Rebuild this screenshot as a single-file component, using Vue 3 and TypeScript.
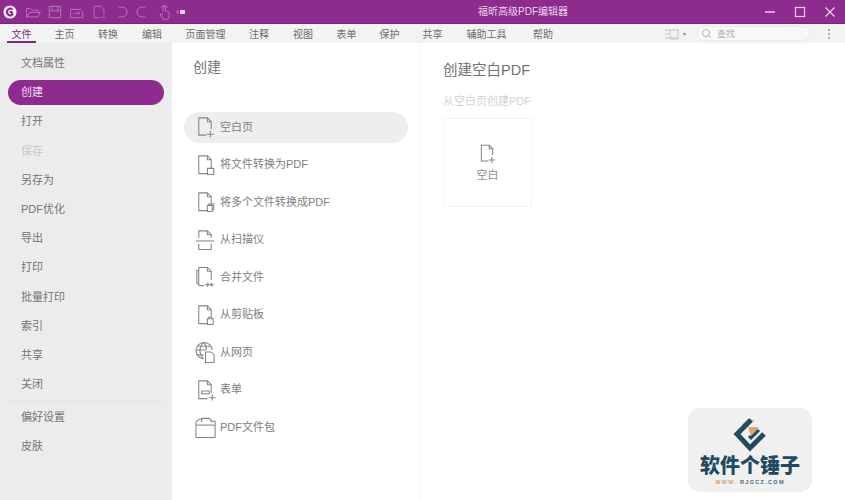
<script setup lang="ts">
const tabs = [
  { label: '文件', w: 43 }, { label: '主页', w: 43 }, { label: '转换', w: 44 }, { label: '编辑', w: 44 },
  { label: '页面管理', w: 63 }, { label: '注释', w: 44 }, { label: '视图', w: 44 }, { label: '表单', w: 43 },
  { label: '保护', w: 43 }, { label: '共享', w: 43 }, { label: '辅助工具', w: 65 }, { label: '帮助', w: 48 }
]
const side1 = ['文档属性', '创建', '打开', '保存', '另存为', 'PDF优化', '导出', '打印', '批量打印', '索引', '共享', '关闭']
const side2 = ['偏好设置', '皮肤']
const items = [
  { label: '空白页', extra: 'M17 16v7 M13.500 19.500h7', body: 'M13 20.500H5V2.500h9l4 4V14 M14 2.500v4h4' },
  { label: '将文件转换为PDF', extra: 'M14 15.500h6.500v6.500H14z', body: 'M14 21H5V2.500h9l4 4V15.500 M14 2.500v4h4' },
  { label: '将多个文件转换成PDF', extra: 'M14 15.500h5v6.500h-5z M15.500 15.500V14h5v6h-1.500', body: 'M14 21H5V2.500h9l4 4V14 M14 2.500v4h4' },
  { label: '从扫描仪', extra: 'M2 13h19', body: 'M5 10V2.500h9l4 4V10 M14 2.500v4h4 M5 16v6h13v-6' },
  { label: '合并文件', extra: 'M11 20h4 M13.500 18l2 2-2 2 M21 20h-3.500 M19 18l-2 2 2 2', body: 'M3 19V5h2 M5 21V2h9l4 4v9 M14 2v4h4 M5 21h5 M3 19h2' },
  { label: '从剪贴板', extra: 'M14 16h6v6h-6z M15.500 16v-2h3v2', body: 'M14 21H5V2.500h9l4 4V13 M14 2.500v4h4' },
  { label: '从网页', extra: 'M12 12h6l3 3v8h-9z', body: 'M10 19a8.500 8.500 0 1 1 9-9 M2 10h10 M10 2c-5 5-5 12 0 17 M10 2c2 2 3 5 3 8 M3 6h14 M3 15h7' },
  { label: '表单', extra: 'M8 13h8v3H8z M19 16.500v6.500 M15.500 20h7', body: 'M14 21H5V2.500h9l4 4V15 M14 2.500v4h4' },
  { label: 'PDF文件包', extra: 'M2 10h20', body: 'M2 7v16h20V6h-5 M2 7l3-3h3 M8 7V3h8l2 2v2' }
]
const toolbar = [
  'M2 6h5l2 2h8v3 M2 6v11h15l3-6H6l-3 6',
  'M3 3h15v15H3z M3 9h15 M7 3v6 M14 3v6',
  'M2 7h13l3 3v8H2z M6 12h8 M12 10l2 2-2 2',
  'M4 3h9l4 4v8 M4 3v15h7 M14 16v3 M17 16v3',
  'M7 4h5a6 6 0 0 1 0 13H7',
  'M14 4H9a6 6 0 0 0 0 13h5',
  'M8 10V3a2 2 0 0 1 3 0v6l5 2v6l-2 3H8l-4-6 4-1 M5 5a5 5 0 0 1 9 0'
]
</script>

<template>
  <div class="app">
    <header class="titlebar">
      <div class="tb-left">
        <svg class="logo" width="14" height="14" viewBox="0 0 17 17">
          <circle cx="8.500" cy="8.500" r="8" fill="#f4eef4" />
          <path d="M11.500 5.500a4 4 0 1 0 0 6l-1-3H8" fill="none" stroke="#8e2a8e" stroke-width="2.400" />
        </svg>
        <svg v-for="(d, i) in toolbar" :key="i" class="tool" width="16" height="16" viewBox="0 0 21 21">
          <path :d="d" fill="none" stroke="#b77eb7" stroke-width="1.200" />
        </svg>
        <span class="caret">▾</span>
        <span class="qat"></span>
      </div>
      <div class="app-title">福昕高级PDF编辑器</div>
      <div class="winctl">
        <svg width="12" height="12" viewBox="0 0 12 12"><path d="M1 6h10" stroke="#f0d8f0" stroke-width="1.400" /></svg>
        <svg width="12" height="12" viewBox="0 0 12 12"><rect x="1.500" y="1.500" width="9" height="9" fill="none" stroke="#f0d8f0" stroke-width="1.200" /></svg>
        <svg width="12" height="12" viewBox="0 0 12 12"><path d="M1.500 1.500l9 9M10.500 1.500l-9 9" stroke="#f0d8f0" stroke-width="1.100" /></svg>
      </div>
    </header>

    <nav class="tabbar">
      <div class="tabs">
        <span v-for="(t, i) in tabs" :key="t.label" class="tab" :class="{ active: i === 0 }" :style="{ width: t.w + 'px' }">{{ t.label }}</span>
      </div>
      <div class="tab-right">
        <svg width="16" height="14" viewBox="0 0 16 14">
          <path d="M1 3h14M1 7h4M1 11h14M6 3v9h8V3" fill="none" stroke="#c4c4c4" />
        </svg>
        <span class="mini-caret">▾</span>
        <div class="search">
          <svg width="11" height="11" viewBox="0 0 11 11"><circle cx="5" cy="5" r="3.500" fill="none" stroke="#b5b5b5" /><path d="M7.500 7.500L10 10" stroke="#b5b5b5" /></svg>
          <span>查找</span>
        </div>
        <div class="dots"><i></i><i></i><i></i></div>
      </div>
    </nav>

    <main class="body">
      <aside class="sidebar">
        <div v-for="(s, i) in side1" :key="s" class="side-item" :class="{ current: i === 1, disabled: i === 3 }">{{ s }}</div>
        <div class="side-divider"></div>
        <div v-for="s in side2" :key="s" class="side-item">{{ s }}</div>
      </aside>

      <section class="middle">
        <h2 class="mid-title">创建</h2>
        <ul class="list">
          <li v-for="(it, i) in items" :key="it.label" class="row" :class="{ selected: i === 0 }">
            <svg width="23" height="24" viewBox="0 0 24 24">
              <path :d="it.body" fill="none" stroke="#858585" stroke-width="1.100" />
              <path :d="it.extra" fill="none" stroke="#858585" stroke-width="1.100" />
            </svg>
            <span>{{ it.label }}</span>
          </li>
        </ul>
      </section>

      <section class="detail">
        <h2 class="det-title">创建空白PDF</h2>
        <p class="det-sub">从空白页创建PDF</p>
        <div class="card">
          <svg width="21" height="21" viewBox="0 0 24 24">
            <path d="M13 20.500H5V2.500h9l4 4V14 M14 2.500v4h4 M17 16v7 M13.500 19.500h7" fill="none" stroke="#858585" stroke-width="1.200" />
          </svg>
          <span>空白</span>
        </div>
      </section>
    </main>

    <div class="watermark">
      <svg width="36" height="36" viewBox="0 0 36 36">
        <path d="M10 9l7-6 5 2" fill="none" stroke="#d9bc9a" stroke-width="1.500" />
        <path d="M16 11h10l-2 9h-5z" fill="#e2a56a" />
        <path d="M19 4L5 18l13 14 14-14" fill="none" stroke="#1f4a5f" stroke-width="5" />
        <path d="M17 20l2 2 8-8" fill="none" stroke="#1f4a5f" stroke-width="3" />
      </svg>
      <div class="wm-name">软件个锤子</div>
      <div class="wm-url"><em>WWW.</em> RJGCZ.COM</div>
    </div>
  </div>
</template>

<style scoped>
.app {
  position: relative;
  width: 845px;
  height: 500px;
  overflow: hidden;
  display: flex;
  flex-direction: column;
  background: #fff;
  font-family: "Noto Sans CJK SC", "Liberation Sans", sans-serif;
  color: #666;
}
.titlebar {
  height: 23px;
  flex: none;
  background: #8e2b8e;
  border-bottom: 1px solid #7c237c;
  display: flex;
  align-items: center;
  position: relative;
}
.tb-left {
  display: flex;
  align-items: center;
  padding-left: 3px;
  width: 240px;
}
.logo { margin-right: 8px; }
.tool { margin-right: 6px; }
.caret { color: #b77eb7; font-size: 6px; margin-left: -3px; }
.qat { width: 5px; height: 4px; background: #e8d0e8; margin-left: 1px; }
.app-title {
  position: absolute;
  left: 478px;
  top: 4px;
  font-size: 10px;
  line-height: 15px;
  color: #ecd4ec;
  font-family: "Liberation Sans", "Noto Sans CJK SC", sans-serif;
  white-space: nowrap;
}
.winctl {
  margin-left: auto;
  display: flex;
  gap: 18px;
  padding-right: 9px;
  height: 100%;
  align-items: center;
}
.tabbar {
  height: 19px;
  flex: none;
  background: #f3f3f3;
  display: flex;
  align-items: center;
}
.tabs { display: flex; height: 100%; }
.tab {
  font-size: 10px;
  line-height: 19px;
  text-align: center;
  color: #6c6c6c;
  position: relative;
}
.tab.active { color: #7b2a7b; }
.tab.active::after {
  content: "";
  position: absolute;
  left: 7px;
  right: 7px;
  bottom: 0;
  height: 2px;
  background: #7c2a7c;
}
.tab-right {
  margin-left: auto;
  display: flex;
  align-items: center;
  padding-right: 15px;
}
.mini-caret { font-size: 6px; color: #888; margin: 0 11px 0 3px; }
.search {
  width: 113px;
  height: 15px;
  box-sizing: border-box;
  background: #f8f8f8;
  border: 1px solid #ececec;
  border-radius: 7px;
  display: flex;
  align-items: center;
  gap: 5px;
  padding-left: 3px;
  font-size: 9px;
  color: #b0b0b0;
  margin-right: 18px;
}
.dots { display: flex; flex-direction: column; gap: 2px; }
.dots i { display: block; width: 2px; height: 2px; background: #b0b0b0; }
.body { flex: 1; display: flex; min-height: 0; }
.sidebar {
  width: 172px;
  flex: none;
  box-sizing: border-box;
  background: #ececec;
  padding: 8px 8px 0;
}
.side-item {
  height: 25px;
  margin-bottom: 4.200px;
  padding-left: 13px;
  font-size: 11px;
  line-height: 25px;
  color: #747474;
  font-family: "Liberation Sans", "Noto Sans CJK SC", sans-serif;
}
.side-item.current {
  background: #8e2b8e;
  color: #f0dcf0;
  border-radius: 13px;
  width: 156px;
  box-sizing: border-box;
}
.side-item.disabled { color: #c6c6c6; }
.side-divider {
  height: 1px;
  background: #e2e2e2;
  margin: 0 0 3px;
}
.middle {
  width: 249px;
  flex: none;
  box-sizing: border-box;
  border-right: 1px solid #f4f4f4;
  padding: 13px 12px 0;
}
.mid-title {
  margin: 0 0 36px 9px;
  font-size: 14px;
  line-height: 20px;
  font-weight: 400;
  color: #737373;
}
.list { list-style: none; margin: 0; padding: 0; }
.row {
  height: 31px;
  margin-bottom: 6.500px;
  display: flex;
  align-items: center;
  gap: 3px;
  padding-left: 10px;
  padding-bottom: 1px;
  border-radius: 16px;
  font-size: 11px;
  line-height: 29px;
  box-sizing: border-box;
  color: #7e7e7e;
  font-family: "Liberation Sans", "Noto Sans CJK SC", sans-serif;
}
.row.selected { background: #eeeeee; }
.detail { flex: 1; padding: 17px 0 0 22px; }
.det-title {
  margin: 0;
  font-size: 14.500px;
  line-height: 20px;
  font-weight: 400;
  color: #727272;
  font-family: "Liberation Sans", "Noto Sans CJK SC", sans-serif;
}
.det-sub {
  margin: 13px 0 9px;
  font-size: 11px;
  line-height: 16px;
  color: #d2d2d2;
  font-family: "Liberation Sans", "Noto Sans CJK SC", sans-serif;
}
.card {
  width: 89px;
  height: 89px;
  box-sizing: border-box;
  border: 1px solid #f4f4f4;
  display: flex;
  flex-direction: column;
  align-items: center;
  padding-top: 24px;
  gap: 2px;
  font-size: 11px;
  color: #8c8c8c;
}
.watermark {
  position: absolute;
  left: 688px;
  top: 408px;
  width: 124px;
  height: 84px;
  background: #f0f0f0;
  border-radius: 12px;
  display: flex;
  flex-direction: column;
  align-items: center;
  padding-top: 8px;
  box-sizing: border-box;
}
.wm-name {
  font-size: 20px;
  line-height: 20px;
  font-weight: 900;
  color: #1f4a5f;
  margin-top: 3px;
  white-space: nowrap;
}
.wm-url {
  font-size: 5.500px;
  line-height: 8px;
  letter-spacing: 1.300px;
  font-weight: 700;
  color: #48687a;
  font-family: "Liberation Sans", sans-serif;
  margin-top: 3px;
}
.wm-url em { font-style: normal; color: #d5a270; }
</style>
